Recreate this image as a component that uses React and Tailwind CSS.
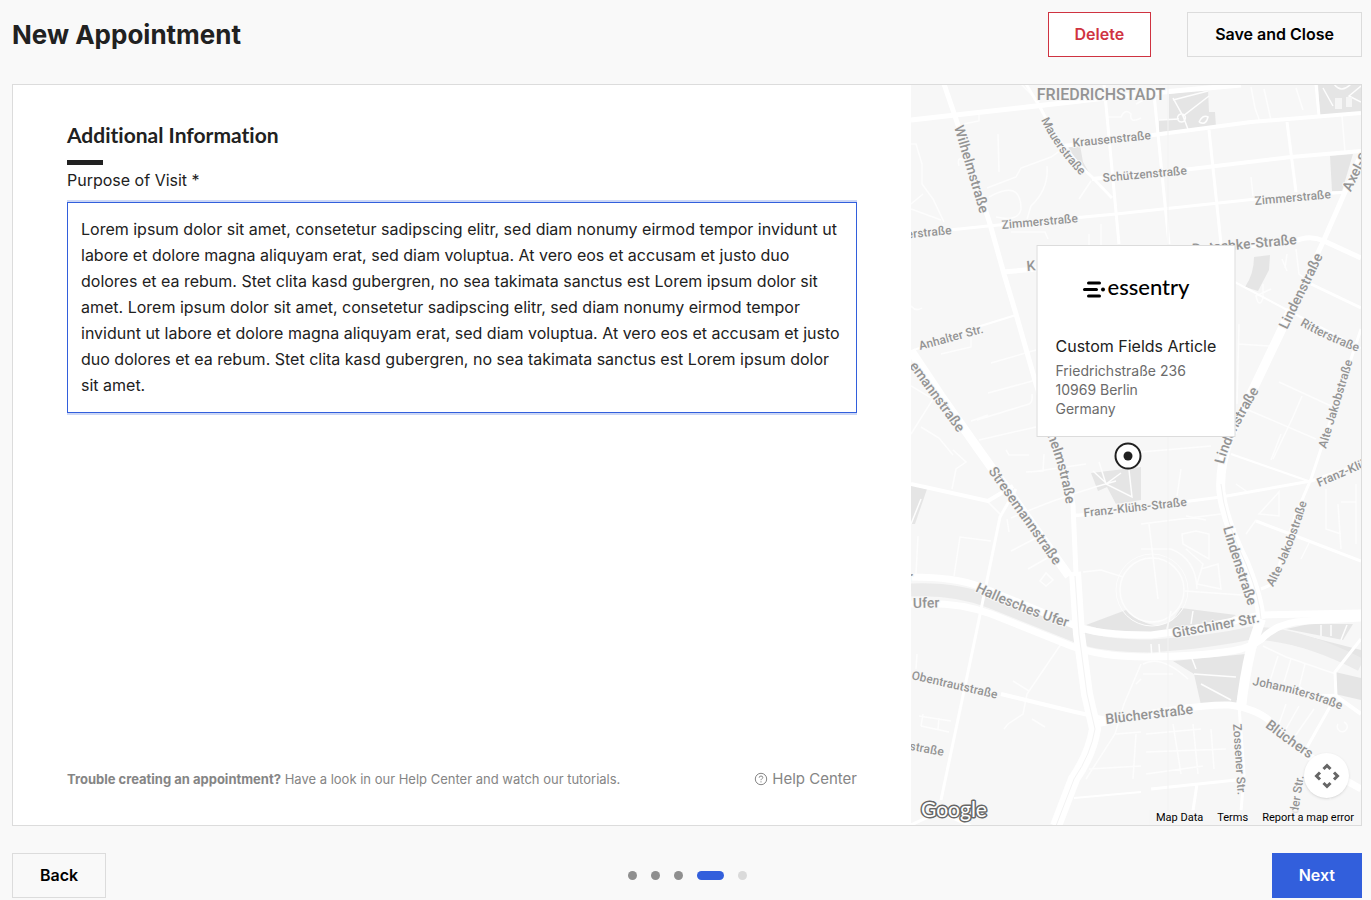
import React, { useState } from "react";
import clsx from "clsx";

const LOREM =
  "Lorem ipsum dolor sit amet, consetetur sadipscing elitr, sed diam nonumy eirmod tempor invidunt ut labore et dolore magna aliquyam erat, sed diam voluptua. At vero eos et accusam et justo duo dolores et ea rebum. Stet clita kasd gubergren, no sea takimata sanctus est Lorem ipsum dolor sit amet. Lorem ipsum dolor sit amet, consetetur sadipscing elitr, sed diam nonumy eirmod tempor invidunt ut labore et dolore magna aliquyam erat, sed diam voluptua. At vero eos et accusam et justo duo dolores et ea rebum. Stet clita kasd gubergren, no sea takimata sanctus est Lorem ipsum dolor sit amet.";

const parks = [
  "M258 10 L297 5 L298 28 L304 28 L305 43 L248 48 L248 36 L258 35 Z",
  "M407 0 H450 V28 L409 32 Z",
  "M419 72 L442 70 L431 107 L421 107 Z",
  "M343 173 L359 171 L358 186 L347 207 L334 203 Q343 190 343 173 Z",
  "M156 61 H169 L172 78 L180 92 L170 84 Z",
  "M180 389 L230 383 V416 L205 420 L196 403 L187 407 Z",
  "M0 401 L16 405 L4 440 H0 Z",
  "M175 541 L215 526 Q242 550 262 536 L270 524 L325 531 L300 546 L215 552 Z",
  "M262 577 L335 570 L325 620 L290 621 L283 590 Z",
  "M375 545 L398 540 H442 L432 556 Z",
  "M365 556 L380 548 L450 566 V580 Z",
  "M424 588 L450 594 V616 L424 610 Z",
];

// [width, path]
const roads = [
  [5, "M33 0 L44 32 L79 140 L93 190 L105 230 L125 300 L158 400 L162 421 L165 490"],
  [5, "M0 36 L125 22 L230 10 L330 1"],
  [3, "M115 0 L130 25 Q150 65 181 93 L201 114"],
  [3, "M193 0 L208 160"],
  [3, "M0 150 L77 142 L205 130 L345 115 L436 108"],
  [4, "M152 62 L250 50 L340 38 L450 29"],
  [4, "M181 95 L280 85 L380 73 L450 67"],
  [3, "M243 10 L258 160"],
  [3, "M298 46 L310 160"],
  [3, "M376 38 L385 108"],
  [3, "M405 0 L408 32"],
  [5, "M450 70 L434 108 L412 158 L380 226"],
  [9, "M380 226 L347 295 L318 355 Q308 385 310 408 Q313 435 335 480 Q349 515 350 535"],
  [5, "M300 165 L382 158 Q398 150 413 157 L450 174"],
  [2, "M320 196 L380 228 L450 264"],
  [3, "M400 200 L450 224"],
  [3, "M450 245 L400 395 L385 430 L362 500 L350 505"],
  [9, "M0 267 L30 312 L68 366 L158 492"],
  [2, "M0 267 L60 245 L105 231"],
  [7, "M0 493 Q45 493 70 503 L165 542 Q185 551 240 551 Q290 545 350 531 L450 529"],
  [7, "M0 520 Q45 517 80 530 L160 562 Q190 573 235 573 Q300 572 330 565 Q347 560 355 551 Q370 538 395 537 L450 534"],
  [12, "M164 488 L168 550 L176 610 L184 645 Q180 670 163 695 L145 742"],
  [4, "M90 610 L160 627 L195 635"],
  [7, "M185 640 Q280 620 318 621 Q350 625 365 643 Q395 675 450 705"],
  [10, "M350 535 L340 565 Q333 595 330 624"],
  [3, "M328 622 L333 690 L329 740"],
  [3, "M105 405 L89 433 L65 550 L30 716"],
  [4, "M0 400 L77 417 L102 402"],
  [3, "M163 432 L310 413 L400 397 L450 380"],
  [2, "M320 370 L400 398"],
  [3, "M345 437 L390 454 L450 477"],
  [5, "M92 188 L126 185"],
  [4, "M450 630 L425 612 L400 612 L388 604"],
  [3, "M450 555 L424 588 L425 612 L395 665"],
  [3, "M0 741 L28 728 L60 742"],
  [2, "M163 714 L230 708"],
  [3, "M240 705 L325 696 M286 700 L280 740"],
  [3, "M430 703 L400 690"],
];

const lanes = [
  "M0 60 L5 60 L11 80 L11 100 L22 115 L33 138 M0 120 L12 110 M0 125 L30 136",
  "M52 40 L68 37 V31 M48 82 Q45 70 56 78 M76 104 L105 93 L110 84 L140 73 L156 62",
  "M78 113 Q110 95 110 125 Q108 138 85 133 M87 50 L88 88 M136 82 Q138 105 120 122 L116 135",
  "M168 115 L180 97 M100 148 L134 148 L137 155 M178 150 V161 M190 140 V161",
  "M195 33 L210 33 Q214 24 220 30 Q218 40 230 34 M110 0 L128 18 M225 20 L240 12",
  "M340 3 L344 24 L349 38 M353 5 L360 36 M385 4 L392 26 M340 93 L342 112 M431 32 L434 68",
  "M262 16 L297 7 M262 14 L272 32 L298 12 M272 32 L278 48 M248 36 L268 35 M270 30 a4 4 0 1 0 1 0 M288 38 Q292 30 297 33 Q295 42 288 38",
  "M412 4 L422 22 M450 2 L438 12 L450 18 M423 0 Q430 10 440 0",
  "M371 175 L376 187 M376 170 L374 184 M385 165 L388 190 L399 198 M360 205 L345 212 Q348 225 352 214 V200",
  "M0 222 Q5 228 11 224 M30 270 L60 263 V252 M80 279 L125 266 M77 309 L125 296 M60 337 L77 331 M66 336 L118 320 Q122 318 121 310",
  "M0 302 L22 315 L0 350 M10 343 L28 354 L42 371 M68 356 L125 343 M95 366 L98 371 H118 M115 388 L132 387 L133 370 M120 388 L175 380",
  "M42 366 L55 378 L45 385 L41 405 M0 440 L10 415 M5 490 L7 452 M43 492 L49 453 L80 457",
  "M76 417 L90 431 M96 435 L98 448 M100 467 L125 454 M117 485 L145 469 M129 497 L135 489 L142 496 L135 502 Z",
  "M172 488 L190 486 L212 493 M100 434 Q150 412 205 397 M165 430 L178 430 M188 378 L195 400 L221 413 L218 386 M182 387 L196 400 M195 400 L210 389",
  "M230 368 L300 362 M270 385 L266 412 M230 440 L310 430 M275 432 L295 436 M325 400 L338 409 M348 430 L368 408 L368 432 Z M360 376 L370 350",
  "M368 298 L420 322 M391 312 L382 333 L362 375 M335 325 L405 355 M327 260 L358 262 M328 240 L326 320",
  "M271 450 L285 447 L298 450 V475 L272 460 Z M275 465 L292 480 L286 500 L310 505 L307 480 L290 485 M260 465 Q285 475 286 505",
  "M274 507 L345 512 M230 465 H260 M238 440 L247 515 M325 445 L315 440 M335 450 L345 436 M390 475 L398 459",
  "M415 405 L415 445 L430 450 M430 418 L445 418 M427 420 L430 465 M445 400 V460",
  "M150 560 L116 610 L112 630 L97 640 L93 645 M102 597 L118 607 M121 635 L134 643 M8 632 L40 637 M10 642 L38 648 M12 630 L10 642 M28 634 L27 645 M5 585 L6 570",
  "M230 580 L213 620 L204 650 L175 695 M225 600 L230 595 M205 650 L230 648 M178 685 L230 682 M225 650 L222 695",
  "M232 580 Q250 570 277 595 M232 590 H262 M283 590 L325 593 M290 600 L320 616 M280 572 L285 585 M352 562 L375 573 L425 590",
  "M367 572 L358 600 M380 575 L373 598 M394 580 L388 604 M375 620 L368 640 M388 622 L375 645 M403 625 L382 655",
  "M235 650 L290 645 M235 668 L315 665 M235 690 L292 682 M262 640 L270 690 M282 640 L287 690 M300 645 L303 685",
  "M260 527 L256 545 M282 527 L280 540 M410 541 V552 M420 541 V552 M436 541 L430 556 M240 560 L241 575 M248 560 L249 575",
  "M427 640 a5 5 0 1 0 6 -2 M395 700 Q410 706 420 715",
];

// [font size, baseline path, name, text anchor]
const labels = [
  [14, "M43 43 L72 140", "Wilhelmstraße"],
  [12, "M130 36 Q145 68 176 98", "Mauerstraße"],
  [12, "M162 63 L262 53", "Krausenstraße"],
  [12, "M192 98 L292 89", "Schützenstraße"],
  [12, "M91 145 L181 137", "Zimmerstraße"],
  [12, "M-30 157 L41 150", "erstraße", "end"],
  [12, "M344 121 L434 113", "Zimmerstraße"],
  [14, "M116 187 L180 181", "K"],
  [14, "M236 174 L386 160", "Dutschke-Straße", "end"],
  [14, "M376 246 L417 162", "Lindenstraße"],
  [14, "M313 380 Q319 353 354 297", "Lindenstraße"],
  [12, "M389 241 Q415 257 458 272", "Ritterstraße"],
  [12, "M415 365 L446 263", "Alte Jakobstraße"],
  [12, "M9 266 L86 245", "Anhalter Str."],
  [14, "M-40 230 L47 349", "emannstraße", "end"],
  [14, "M118 310 Q147 368 155 420", "helmstraße", "end"],
  [14, "M77 387 L150 491", "Stresemannstraße"],
  [12, "M173 433 L293 420", "Franz-Klühs-Straße"],
  [14, "M64 507 Q110 530 175 549", "Hallesches Ufer"],
  [14, "M2 524 L42 523", "Ufer"],
  [14, "M-40 498 L2 498", "r", "end"],
  [14, "M312 444 Q322 479 342 536", "Lindenstraße"],
  [12, "M362 503 Q381 470 400 405", "Alte Jakobstraße"],
  [12, "M408 403 L498 364", "Franz-Klü"],
  [14, "M262 554 L372 534", "Gitschiner Str."],
  [12, "M0 595 L105 619", "Obentrautstraße"],
  [12, "M-60 655 L32 672", "straße", "end"],
  [14, "M195 640 L305 627", "Blücherstraße"],
  [12, "M341 601 Q395 610 442 631", "Johanniterstraße"],
  [14, "M354 643 Q378 662 430 696", "Blüchers"],
  [12, "M322 640 L328 730", "Zossener Str."],
  [12, "M387 730 L397 665", "der Str."],
  [14, "M440 108 Q448 88 466 60", "Axel-Sp"],
];

const MapDrawing = () => (
  <svg
    className="absolute inset-0 w-full h-full"
    viewBox="0 1 450 740"
    preserveAspectRatio="xMinYMin slice"
    aria-label="Map"
  >
    <rect width="450" height="742" fill="#f7f7f7" />
    {parks.map((d) => (
      <path key={d} d={d} fill="#e5e5e5" />
    ))}
    <path
      d="M0 506 Q45 504 80 518 L165 552 Q190 562 240 562 Q300 558 340 549 Q390 550 450 581"
      fill="none"
      stroke="#ebebeb"
      strokeWidth="13"
    />
    <g fill="none" stroke="#fdfdfd" strokeWidth="1.5">
      {lanes.map((d) => (
        <path key={d} d={d} />
      ))}
      <circle cx="241" cy="506" r="32" />
      <circle cx="241" cy="506" r="36" strokeWidth="1" />
    </g>
    <g fill="none" stroke="#ffffff" strokeLinejoin="round">
      {roads.map(([width, d]) => (
        <path key={d} d={d} strokeWidth={width} />
      ))}
    </g>
    <g fill="none" stroke="#f3f3f3">
      <path d="M310 400 Q313 435 335 480 Q349 515 350 535" />
      <path d="M164 492 L168 550 L176 610 L184 645 Q180 670 163 695 L145 742" />
      <path d="M257 0 V742" />
    </g>
    <rect x="424" y="14" width="7" height="11" fill="#f5f5f5" />
    <rect x="435" y="13" width="6" height="10" fill="#f5f5f5" />
    <g
      fill="#949494"
      stroke="#f7f7f7"
      strokeWidth="2"
      paintOrder="stroke"
      className="font-[Roboto,sans-serif] font-medium"
    >
      <text x="190" y="16" fontSize="16" textAnchor="middle">
        FRIEDRICHSTADT
      </text>
      {labels.map(([size, d, name, anchor], i) => (
        <React.Fragment key={i}>
          <path id={`street-${i}`} d={d} fill="none" stroke="none" />
          <text fontSize={size} textAnchor={anchor || "start"}>
            <textPath
              href={`#street-${i}`}
              startOffset={anchor ? "100%" : "0%"}
            >
              {name}
            </textPath>
          </text>
        </React.Fragment>
      ))}
    </g>
  </svg>
);

const EssentryLogo = () => (
  <div className="flex items-center justify-center gap-0.5 text-black">
    <svg width="23" height="17" viewBox="0 0 23 17" aria-hidden="true">
      <g stroke="currentColor" strokeWidth="3" strokeLinecap="round">
        <path d="M6 2 H17" />
        <path d="M2 8.5 H14" />
        <path d="M6 15 H17" />
      </g>
      <circle cx="20.5" cy="8.5" r="2" />
    </svg>
    <span className="font-[Lato,sans-serif] font-medium text-[22px] leading-6 pb-1">
      essentry
    </span>
  </div>
);

const GoogleLogo = () => (
  <svg
    width="70"
    height="28"
    viewBox="0 0 70 28"
    className="absolute left-2 bottom-0"
  >
    <text
      x="2"
      y="20"
      fontSize="21"
      fill="#ffffff"
      stroke="#666666"
      strokeWidth="3"
      strokeLinejoin="round"
      paintOrder="stroke"
      className="font-[Lato,sans-serif] font-normal"
    >
      Google
    </text>
  </svg>
);

const LocationMap = () => (
  <div className="relative overflow-hidden">
    <MapDrawing />

    <div className="absolute top-40 left-1/2 -translate-x-1/2 w-[199px] h-48 bg-white border border-[#dcdcdc] px-[18px] pt-[29px]">
      <EssentryLogo />
      <h3 className="mt-[31px] text-base leading-6 whitespace-nowrap">
        Custom Fields Article
      </h3>
      <address className="mt-[3px] not-italic text-sm leading-[19px] text-[#6b6b6b]">
        Friedrichstraße 236
        <br />
        10969 Berlin
        <br />
        Germany
      </address>
    </div>
    <svg
      width="28"
      height="28"
      viewBox="0 0 28 28"
      className="absolute top-[357px] left-[203px]"
    >
      <circle cx="14" cy="14" r="12.5" fill="#fff" stroke="#212121" strokeWidth="2" />
      <circle cx="14" cy="14" r="4.5" fill="#212121" />
    </svg>

    <GoogleLogo />
    <button
      type="button"
      aria-label="Map camera controls"
      className="absolute right-3 bottom-[27px] w-[45px] h-[45px] rounded-full bg-white shadow flex items-center justify-center"
    >
      <svg
        width="26"
        height="26"
        viewBox="0 0 26 26"
        fill="none"
        stroke="#666"
        strokeWidth="3"
      >
        <path d="M9.5 6 L13 2.5 L16.5 6" />
        <path d="M9.5 20 L13 23.5 L16.5 20" />
        <path d="M6 9.5 L2.5 13 L6 16.5" />
        <path d="M20 9.5 L23.5 13 L20 16.5" />
      </svg>
    </button>
    <div className="absolute right-0 bottom-0 flex gap-3.5 px-[7px] bg-[#f5f5f5]/80 font-[Roboto,sans-serif] text-[11px] leading-[15px] text-black whitespace-nowrap">
      <a href="#data">Map Data</a>
      <a href="#terms">Terms</a>
      <a href="#report">Report a map error</a>
    </div>
  </div>
);

const steps = ["done", "done", "done", "current", "open"];

const App = () => {
  const [purpose, setPurpose] = useState(LOREM);

  return (
    <main className="min-h-screen flex flex-col bg-[#f9f9f9] pt-3 pb-0.5 pl-3 pr-[9px] font-[Inter,sans-serif] text-[#212121]">
      <header className="flex items-center justify-between">
        <h1 className="text-[26px] leading-9 font-bold">New Appointment</h1>
        <div className="flex gap-9">
          <button
            type="button"
            className="h-[45px] px-[26px] pb-0.5 bg-white border border-[#cf3341] text-[#cf3341] font-semibold"
          >
            Delete
          </button>
          <button
            type="button"
            className="h-[45px] px-[27px] pb-0.5 border border-[#dcdcdc] text-black font-semibold"
          >
            Save and Close
          </button>
        </div>
      </header>

      <div className="flex-1 my-[27px] grid grid-cols-[898fr_450fr] bg-white border border-[#dcdcdc]">
        <section className="flex flex-col px-[54px] pt-[37px] pb-9">
          <h2 className="font-[Lato,sans-serif] text-[21px] leading-[26px] font-bold [font-variant-ligatures:none]">
            Additional Information
          </h2>
          <div className="mt-3 w-9 h-[5px] bg-[#212121]" />
          <label htmlFor="purpose" className="mt-[3px] text-base leading-6">
            Purpose of Visit *
          </label>
          <textarea
            id="purpose"
            rows={7}
            value={purpose}
            onChange={(e) => setPurpose(e.target.value)}
            className="mt-2.5 px-[13px] py-[13px] h-[211px] resize-none overflow-hidden border border-[#325fdc] shadow-[0_2px_0_#ccd7f6,0_-2px_0_#ccd7f6] outline-none text-base leading-[26px]"
          />
          <div className="mt-auto flex items-center justify-between leading-5 text-[#858585]">
            <p className="text-[13px]">
              <strong className="font-bold">
                Trouble creating an appointment?
              </strong>{" "}
              Have a look in our Help Center and watch our tutorials.
            </p>
            <a
              href="#help"
              className="flex items-center gap-1 text-[15px] leading-5"
            >
              <svg
                width="14"
                height="14"
                viewBox="0 0 14 14"
                fill="none"
                stroke="currentColor"
              >
                <circle cx="7" cy="7" r="5.7" />
                <path d="M5.2 5.7 Q5.2 4 7 4 Q8.8 4 8.8 5.5 Q8.8 6.4 7.7 6.9 Q7 7.3 7 8.2" />
                <path d="M7 9.3 V10.4" />
              </svg>
              Help Center
            </a>
          </div>
        </section>
        <LocationMap />
      </div>

      <footer className="grid grid-cols-3 items-center">
        <button
          type="button"
          className="justify-self-start h-[45px] px-[27px] pb-0.5 border border-[#dcdcdc] text-black font-semibold"
        >
          Back
        </button>
        <div className="flex justify-center gap-3.5">
          {steps.map((step, i) => (
            <span
              key={i}
              className={clsx(
                "h-[9px] rounded-full",
                step === "done" && "w-[9px] bg-[#8f8f8f]",
                step === "current" && "w-[27px] bg-[#325fdc]",
                step === "open" && "w-[9px] bg-[#dadada]"
              )}
            />
          ))}
        </div>
        <button
          type="button"
          className="justify-self-end h-[45px] px-[27px] pb-0.5 bg-[#325fdc] text-white font-semibold"
        >
          Next
        </button>
      </footer>
    </main>
  );
};

export default App;
